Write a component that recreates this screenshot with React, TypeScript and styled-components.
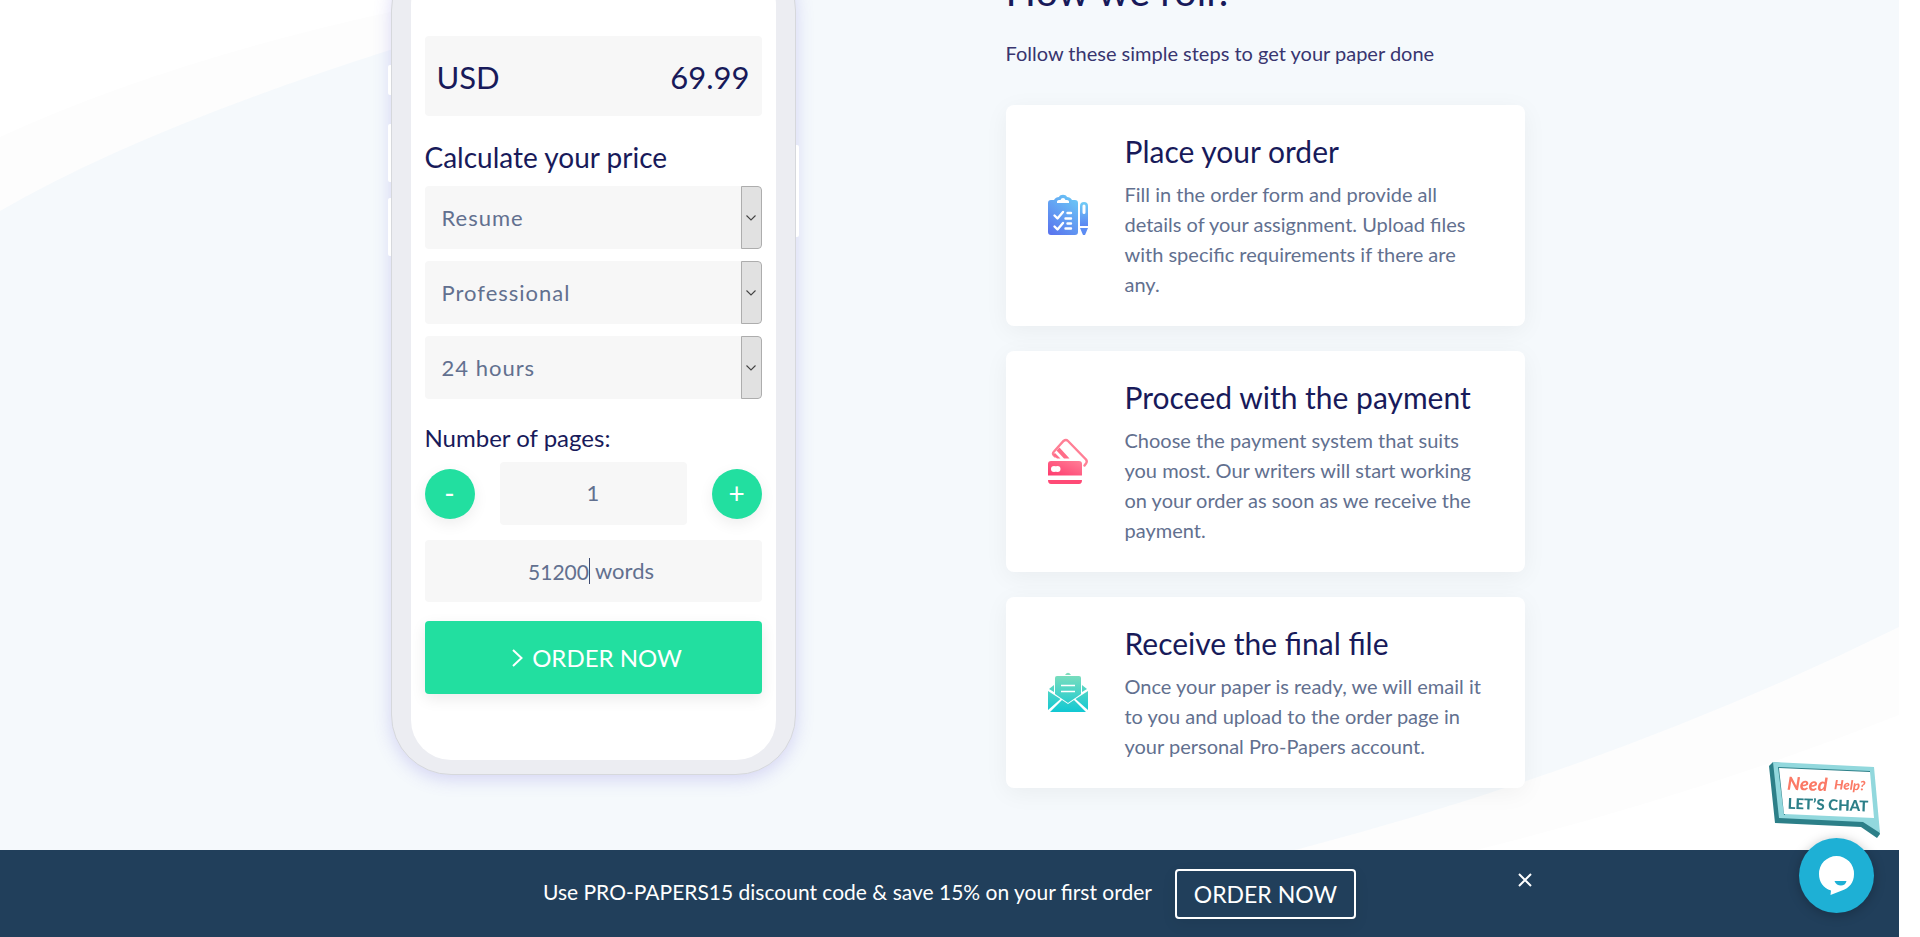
import React, { useState } from 'react';
import styled, { createGlobalStyle } from 'styled-components';

const GlobalStyle = createGlobalStyle`
  *, *::before, *::after { box-sizing: border-box; }
  body {
    margin: 0;
    background: #fff;
    color: #1b1464;
    font-family: Lato, "Liberation Sans", sans-serif;
  }
  button, input, select { font-family: inherit; }
`;

const navy = '#181a5a';
const slate = '#62708f';
const green = '#22dfa0';

const Page = styled.div`
  position: relative;
  min-height: 100vh;
  margin-right: 21px;
  overflow: hidden;
`;

const Backdrop = styled.svg`
  position: absolute;
  inset: 0;
  width: 100%;
  height: 100%;
`;

const Main = styled.main`
  position: relative;
  max-width: 1150px;
  margin: 0 auto;
  padding: 0 0 100px 16px;
  display: grid;
  grid-template-columns: 405px minmax(0, 519px);
  justify-content: space-between;
  align-items: start;
`;

const Phone = styled.section`
  position: relative;
  margin-top: -50px;
  padding: 14px 19px;
  border: 1px solid #d6d8dc;
  border-radius: 60px;
  background: #ecedf2;
  box-shadow: 0 4px 18px rgba(92, 80, 214, 0.22);
`;

const SideKey = styled.span<{ $side: 'left' | 'right'; $top: number; $length: number }>`
  position: absolute;
  ${(p) => p.$side}: -4px;
  top: ${(p) => p.$top}px;
  width: 3px;
  height: ${(p) => p.$length}px;
  background: #fff;
  border-radius: ${(p) => (p.$side === 'left' ? '2px 0 0 2px' : '0 2px 2px 0')};
`;

const Screen = styled.form`
  padding: 71px 14px 66px;
  border-radius: 40px;
  background: #fff;
  display: flex;
  flex-direction: column;
`;

const PriceBox = styled.div`
  height: 80px;
  padding: 2px 12px 0;
  display: flex;
  align-items: center;
  justify-content: space-between;
  border-radius: 4px;
  background: #f7f7f7;
  color: ${navy};
  font-size: 31px;
  line-height: 40px;
`;

const CalcTitle = styled.h2`
  margin: 23px 0 11px;
  color: ${navy};
  font-weight: 400;
  font-size: 28px;
  line-height: 36px;
`;

const Selects = styled.div`
  display: flex;
  flex-direction: column;
  gap: 12px;
`;

const SelectWrap = styled.div`
  position: relative;
  height: 63px;
  overflow: hidden;
  border-radius: 4px;
`;

const Select = styled.select`
  appearance: none;
  width: 100%;
  height: 100%;
  padding: 0 30px 0 17px;
  border: 0;
  background: #f7f7f7;
  color: ${slate};
  font-size: 22px;
  letter-spacing: 1px;
`;

const SelectArrow = styled.span`
  position: absolute;
  inset: 0 0 0 auto;
  width: 21px;
  display: flex;
  align-items: center;
  justify-content: center;
  border: 1px solid #adadad;
  border-radius: 0 4px 4px 0;
  background: #e1e1e1;
  pointer-events: none;
`;

const PagesLabel = styled.label`
  margin: 24px 0 9px;
  color: ${navy};
  font-size: 24px;
  line-height: 30px;
`;

const PagesRow = styled.div`
  display: flex;
  align-items: center;
  justify-content: space-between;
`;

const RoundButton = styled.button`
  width: 50px;
  height: 50px;
  padding: 0 0 2px;
  border: 0;
  border-radius: 50%;
  background: ${green};
  color: #fff;
  font-size: 28px;
  line-height: 48px;
  box-shadow: 0 5px 15px rgba(0, 0, 0, 0.07);
`;

const PagesInput = styled.input`
  width: 187px;
  height: 63px;
  padding: 0 0 2px;
  border: 0;
  border-radius: 4px;
  background: #f7f7f7;
  color: ${slate};
  font-size: 22px;
  text-align: center;
`;

const WordsBox = styled.label`
  height: 62px;
  margin: 15px 0 19px;
  padding-right: 4px;
  display: flex;
  align-items: center;
  justify-content: center;
  border-radius: 4px;
  background: #f7f7f7;
  color: ${slate};
  font-size: 22px;
  line-height: 26px;
`;

const WordsInput = styled.input`
  width: 61px;
  padding: 0;
  border: 0;
  outline: 0;
  background: transparent;
  color: inherit;
  font-size: 21px;
  text-align: right;
`;

const Caret = styled.span`
  width: 1px;
  height: 26px;
  margin-right: 5px;
  background: #3d4a70;
`;

const OrderButton = styled.button`
  height: 73px;
  padding: 0 0 0 8px;
  display: flex;
  align-items: center;
  justify-content: center;
  gap: 9px;
  border: 0;
  border-radius: 4px;
  background: ${green};
  color: #fff;
  font-size: 24px;
  box-shadow: 0 5px 15px rgba(0, 0, 0, 0.08);
`;

const Steps = styled.section`
  margin-top: -36px;
  display: flex;
  flex-direction: column;
`;

const StepsTitle = styled.h2`
  margin: 0;
  color: ${navy};
  font-weight: 400;
  font-size: 40px;
  line-height: 54px;
`;

const StepsLead = styled.p`
  margin: 20px 0 37px;
  color: #38356f;
  font-size: 20px;
  line-height: 30px;
`;

const StepList = styled.ol`
  margin: 0;
  padding: 0;
  list-style: none;
  display: flex;
  flex-direction: column;
  gap: 25px;
`;

const StepCard = styled.li`
  padding: 25px 42px 27px;
  display: flex;
  align-items: center;
  gap: 37px;
  border-radius: 8px;
  background: #fff;
  box-shadow: 0 5px 25px rgba(0, 0, 0, 0.05);
`;

const StepIcon = styled.svg`
  flex: none;
  width: 40px;
  height: 46px;
`;

const StepTitle = styled.h3`
  margin: 0 0 6px;
  color: ${navy};
  font-weight: 400;
  font-size: 30px;
  line-height: 43px;
`;

const StepText = styled.p`
  margin: 0;
  color: ${slate};
  font-size: 20px;
  line-height: 30px;
`;

const PromoBar = styled.aside`
  position: fixed;
  left: 0;
  right: 21px;
  bottom: 0;
  height: 87px;
  display: grid;
  grid-template-columns: 1fr auto 1fr;
  align-items: center;
  background: #213f5b;
  color: #fff;
`;

const PromoOffer = styled.div`
  grid-column: 2;
  display: flex;
  align-items: center;
  gap: 23px;
`;

const PromoText = styled.p`
  margin: 0;
  padding-bottom: 3px;
  font-size: 21px;
  line-height: 30px;
`;

const PromoButton = styled.button`
  height: 50px;
  width: 181px;
  padding: 0;
  border: 2px solid #fff;
  border-radius: 4px;
  background: transparent;
  color: #fff;
  font-size: 23px;
  box-shadow: 0 5px 15px rgba(0, 0, 0, 0.07);
`;

const CloseButton = styled.button`
  align-self: start;
  width: 22px;
  height: 22px;
  margin: 19px 0 0 158px;
  padding: 0;
  border: 0;
  background: transparent;
`;

const ChatWidget = styled.div`
  position: fixed;
  right: 38px;
  bottom: 24px;
  display: flex;
  flex-direction: column;
  align-items: flex-end;
`;

const ChatSign = styled.svg`
  width: 113px;
  height: 76px;
`;

const ChatButton = styled.button`
  width: 75px;
  height: 75px;
  margin-right: 8px;
  padding: 0;
  border: 0;
  border-radius: 50%;
  background: #1eb0d5;
  box-shadow: 0 2px 12px rgba(0, 0, 0, 0.25);
`;

const OrderIcon = () => (
  <StepIcon viewBox="0 0 40 46" aria-hidden="true">
    <defs>
      <linearGradient id="blue" x1="0.1" y1="1" x2="0.7" y2="0">
        <stop offset="0" stopColor="#5a74ee" />
        <stop offset="1" stopColor="#69c3f6" />
      </linearGradient>
      <linearGradient id="pen" x1="0" y1="1" x2="0" y2="0">
        <stop offset="0" stopColor="#5c86f2" />
        <stop offset="1" stopColor="#70cdf6" />
      </linearGradient>
    </defs>
    <path
      fill="url(#blue)"
      d="M3 8h3c1-2 3-3 5-3 1-3 7-3 8 0 2 0 4 1 5 3h3a3 3 0 0 1 3 3v29a3 3 0 0 1-3 3H3a3 3 0 0 1-3-3V11a3 3 0 0 1 3-3Z"
    />
    <path fill="#fff" d="M9 11V9.500q0-1.500 2-1.500h1.500q.5-2 2.500-2t2.500 2H19q2 0 2 1.500V11Z" />
    <g fill="none" stroke="#fff" strokeWidth="2.400" strokeLinecap="round" strokeLinejoin="round">
      <path d="M6.500 23.500l3 3 5.500-6.500M6.500 34.500l3 3 5.500-6.500" />
      <path d="M19.500 21H23M17.500 26.500H23M19.500 31.500H23M17.500 36.500H23" />
    </g>
    <path fill="url(#pen)" fillRule="evenodd" d="M32 34V14a4 4 0 0 1 8 0v20ZM34.500 14v6.500a1.500 1.500 0 0 0 3 0V14a1.500 1.500 0 0 0-3 0Z" />
    <path fill="#5c8cf3" d="M32 36h8l-3 7h-2Z" />
  </StepIcon>
);

const PaymentIcon = () => (
  <StepIcon viewBox="0 0 40 46" aria-hidden="true">
    <defs>
      <linearGradient id="pink" x1="0" y1="1" x2="1" y2="0">
        <stop offset="0" stopColor="#ff3b6e" />
        <stop offset="1" stopColor="#ff7f97" />
      </linearGradient>
    </defs>
    <path
      fill="none"
      stroke="#ff7f95"
      strokeWidth="2.400"
      strokeLinecap="round"
      d="M7 18.500L6 17.500q-2-2 0-4L15.500 3q2.500-2 4.500 0L38 21.500q1.500 2 0 4l-1.500 2"
    />
    <path fill="#ff6d89" d="M11.500 9.500L21.500 20.500H16L8.500 12.500ZM7 15l5.500 5.500H9L5 17Z" />
    <path fill="url(#pink)" d="M3 23h28a3 3 0 0 1 3 3v11.500H0V26a3 3 0 0 1 3-3Z" />
    <path fill="#ff4a76" d="M0 42h34q0 4-3 4H3q-3 0-3-4Z" />
    <circle cx="6" cy="31" r="3" fill="#fff" />
    <circle cx="9.500" cy="31" r="3" fill="#fff" />
  </StepIcon>
);

const MailIcon = () => (
  <StepIcon viewBox="0 0 40 46" aria-hidden="true">
    <defs>
      <linearGradient id="teal" gradientUnits="userSpaceOnUse" x1="0" y1="43" x2="0" y2="3">
        <stop offset="0" stopColor="#11c8d3" />
        <stop offset="1" stopColor="#84dfbb" />
      </linearGradient>
    </defs>
    <g fill="url(#teal)">
      <path d="M17 6q3-4.500 6 0Z" />
      <path d="M6 16v7L1 20ZM34 16v7l5-3Z" />
      <path d="M9 7h22q2 0 2 2v16L20 34 7 25V9q0-2 2-2Z" />
      <path d="M0 22l12.500 8L0 41ZM40 22l-12.500 8L40 41Z" />
      <path d="M14 31l6 4 6-4 12 12H2Z" />
    </g>
    <path stroke="#fff" strokeWidth="1.300" d="M13 16.500h14M13 22.500h14" />
  </StepIcon>
);

const steps = [
  {
    title: 'Place your order',
    text: 'Fill in the order form and provide all details of your assignment. Upload files with specific requirements if there are any.',
    Icon: OrderIcon,
  },
  {
    title: 'Proceed with the payment',
    text: 'Choose the payment system that suits you most. Our writers will start working on your order as soon as we receive the payment.',
    Icon: PaymentIcon,
  },
  {
    title: 'Receive the final file',
    text: 'Once your paper is ready, we will email it to you and upload to the order page in your personal Pro-Papers account.',
    Icon: MailIcon,
  },
];

const selects = [
  { label: 'Type of paper', options: ['Resume', 'Essay'] },
  { label: 'Academic level', options: ['Professional', 'College'] },
  { label: 'Deadline', options: ['24 hours', '48 hours'] },
];

export default function App() {
  const [pages, setPages] = useState(1);
  const [words, setWords] = useState('51200');

  return (
    <>
      <GlobalStyle />
      <Page>
        <Backdrop viewBox="0 0 1899 937" preserveAspectRatio="none" aria-hidden="true">
          <path fill="#fdfdfd" d="M0 137Q163 62 390 12L500-10H1899V715Q1697 795 1480 849Q1260 905 1000 937H0Z" />
          <path fill="#f5f9fc" d="M0 211Q139 130 390 50L600-10H1899V627Q1620 765 1299 849Q1000 915 640 937H0Z" />
        </Backdrop>

        <Main>
          <Phone>
            <SideKey $side="left" $top={114} $length={30} />
            <SideKey $side="left" $top={173} $length={58} />
            <SideKey $side="left" $top={247} $length={58} />
            <SideKey $side="right" $top={194} $length={92} />
            <Screen onSubmit={(e: React.FormEvent) => e.preventDefault()}>
              <PriceBox>
                <span>USD</span>
                <span>69.99</span>
              </PriceBox>
              <CalcTitle>Calculate your price</CalcTitle>
              <Selects>
                {selects.map(({ label, options }) => (
                  <SelectWrap key={label}>
                    <Select aria-label={label}>
                      {options.map((o) => (
                        <option key={o}>{o}</option>
                      ))}
                    </Select>
                    <SelectArrow>
                      <svg width="10" height="6" viewBox="0 0 10 6" aria-hidden="true">
                        <path d="M.5.5L5 5 9.500.5" fill="none" stroke="#444" strokeWidth="1.100" />
                      </svg>
                    </SelectArrow>
                  </SelectWrap>
                ))}
              </Selects>
              <PagesLabel htmlFor="pages">Number of pages:</PagesLabel>
              <PagesRow>
                <RoundButton type="button" aria-label="Fewer pages" onClick={() => setPages(Math.max(1, pages - 1))}>
                  -
                </RoundButton>
                <PagesInput id="pages" value={pages} onChange={(e) => setPages(Number(e.target.value) || 1)} />
                <RoundButton type="button" aria-label="More pages" onClick={() => setPages(pages + 1)}>
                  +
                </RoundButton>
              </PagesRow>
              <WordsBox>
                <WordsInput value={words} onChange={(e) => setWords(e.target.value)} />
                <Caret />
                <span>words</span>
              </WordsBox>
              <OrderButton type="submit">
                <svg width="11" height="18" viewBox="0 0 11 18" aria-hidden="true">
                  <path d="M1 1l8.500 8L1 17" fill="none" stroke="#fff" strokeWidth="2" />
                </svg>
                ORDER NOW
              </OrderButton>
            </Screen>
          </Phone>

          <Steps>
            <StepsTitle>How we roll?</StepsTitle>
            <StepsLead>Follow these simple steps to get your paper done</StepsLead>
            <StepList>
              {steps.map(({ title, text, Icon }) => (
                <StepCard key={title}>
                  <Icon />
                  <div>
                    <StepTitle>{title}</StepTitle>
                    <StepText>{text}</StepText>
                  </div>
                </StepCard>
              ))}
            </StepList>
          </Steps>
        </Main>
      </Page>

      <PromoBar>
        <PromoOffer>
          <PromoText>Use PRO-PAPERS15 discount code &amp; save 15% on your first order</PromoText>
          <PromoButton type="button">ORDER NOW</PromoButton>
        </PromoOffer>
        <CloseButton type="button" aria-label="Close">
          <svg width="22" height="22" viewBox="0 0 22 22" aria-hidden="true">
            <path d="M5 5l12 12M17 5L5 17" stroke="#fff" strokeWidth="2" />
          </svg>
        </CloseButton>
      </PromoBar>

      <ChatWidget>
        <ChatSign viewBox="0 0 113 76" role="img" aria-label="Need Help? Let's chat">
          <path fill="#2c7f88" d="M4 0L0 4l6 57 86 4 16 11 3-4-14-60Z" />
          <path fill="#92d8dd" d="M4 0l101 5 6 66-17-11-84-4Z" />
          <path fill="#2c7f88" d="M9 5l92 4v2L11 7l5 46-1 0Z" />
          <path fill="#fff" d="M10 6l91 4 4 46-90-4Z" />
          <g transform="rotate(2)" fontFamily="Lato, sans-serif">
            <text x="19" y="27" fontSize="18" fontWeight="900" fontStyle="italic" fill="#fb7a66">Need</text>
            <text x="66" y="25" fontSize="13" fontWeight="900" fontStyle="italic" fill="#fb7a66">Help?</text>
            <text x="20" y="46" fontSize="15" fontWeight="900" fill="#2c7f88">LET’S CHAT</text>
          </g>
        </ChatSign>
        <ChatButton type="button" aria-label="Open chat">
          <svg width="75" height="75" viewBox="0 0 75 75" aria-hidden="true">
            <path fill="#fff" d="M37.500 18a17.500 17.500 0 0 1 17.500 18c0 9-5 14-12 16.500L31.500 57l.5-4.500C24 50 20 44 20 36a17.500 17.500 0 0 1 17.500-18Z" />
            <path fill="#1eb0d5" d="M35.500 43h12c-1 6-10 6-12 0Z" />
          </svg>
        </ChatButton>
      </ChatWidget>
    </>
  );
}
